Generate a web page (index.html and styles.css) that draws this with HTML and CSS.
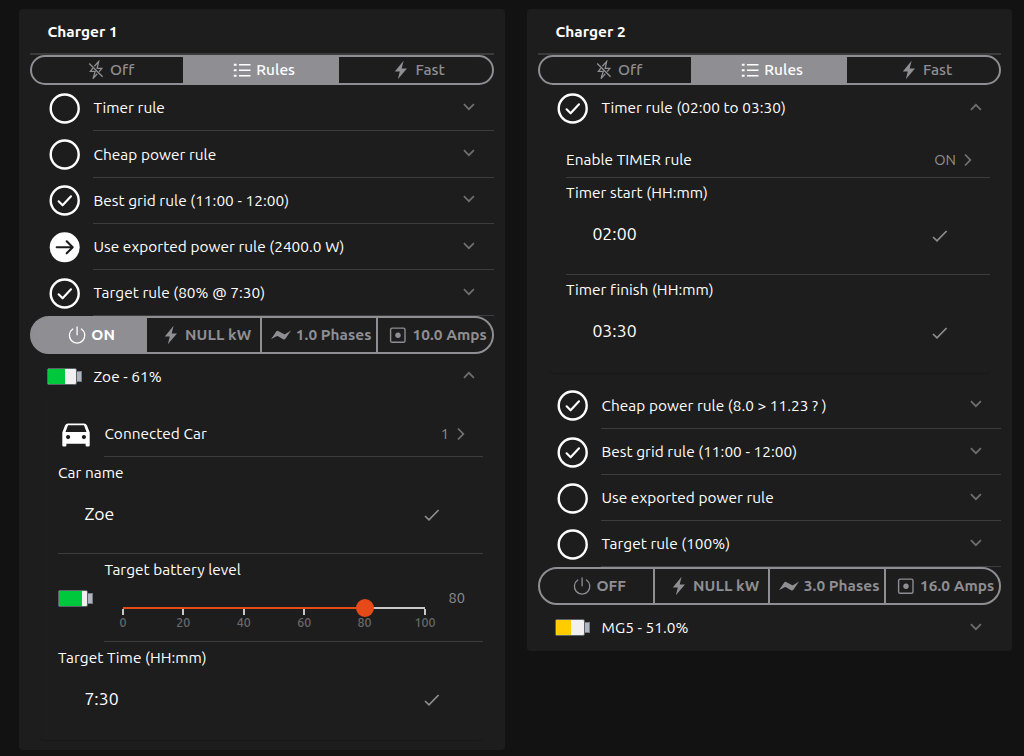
FILE: index.html
```
<!DOCTYPE html>
<html lang="en">
<head>
<meta charset="utf-8">
<title>Chargers</title>
<link rel="stylesheet" href="styles.css">
</head>
<body>
<svg class="defs" aria-hidden="true">
  <symbol id="ring" viewBox="0 0 31 31"><circle cx="15.7" cy="15.5" r="14" fill="none" stroke="#fff" stroke-width="2.4"/></symbol>
  <symbol id="ring-check" viewBox="0 0 31 31"><circle cx="15.7" cy="15.5" r="14" fill="none" stroke="#fff" stroke-width="2.4"/><path d="M9.6 16.3l4 4 8.4-9" fill="none" stroke="#fff" stroke-width="2.1" stroke-linecap="round" stroke-linejoin="round"/></symbol>
  <symbol id="ring-arrow" viewBox="0 0 31 31"><circle cx="15.7" cy="15.3" r="15" fill="#fff"/><path d="M7.7 15.3H23.4M17.7 9.3l6 6-6 6" fill="none" stroke="#1d1d1d" stroke-width="2.1" stroke-linecap="round" stroke-linejoin="round"/></symbol>
  <symbol id="down" viewBox="0 0 12 8"><path d="M.9 1.2l5 5 5-5" fill="none" stroke="#6f6f6f" stroke-width="1.7"/></symbol>
  <symbol id="up" viewBox="0 0 12 8"><path d="M.9 6.8l5-5 5 5" fill="none" stroke="#6f6f6f" stroke-width="1.7"/></symbol>
  <symbol id="right" viewBox="0 0 8 14"><path d="M1 1.5l5.3 5.5L1 12.5" fill="none" stroke="#727272" stroke-width="1.8"/></symbol>
  <symbol id="tick" viewBox="0 0 16 12"><path d="M1 7l4 3.8L14.6 1" fill="none" stroke="#8e8e8e" stroke-width="1.7"/></symbol>
  <symbol id="bolt" viewBox="0 0 20 20"><path d="M12.6 .8L3.8 11.4h5L6.8 19.3 16 8.4h-5.3z" fill="currentColor"/></symbol>
  <symbol id="bolt-off" viewBox="0 0 20 20"><path d="M8.4 6.2l4.2-4.6-1.4 6.8h4.6l-2.6 3.2M6.8 8.2L4.4 11.4h4.8L7 18.6l4.2-4.8" fill="none" stroke="currentColor" stroke-width="1.3"/><path d="M3.2 3.4l13.4 13.4" stroke="currentColor" stroke-width="1.4"/></symbol>
  <symbol id="list" viewBox="0 0 20 20"><path d="M7 4.8h11.5M7 10.2h11.5M7 15.7h11.5" stroke="currentColor" stroke-width="1.4"/><path d="M1.8 4.8h2.8M1.8 10.2h2.8M1.8 15.7h2.8" stroke="currentColor" stroke-width="1.9"/></symbol>
  <symbol id="power" viewBox="0 0 20 20"><path d="M5.8 4A7.7 7.7 0 1 0 14.4 4M10.1 2V9.8" fill="none" stroke="currentColor" stroke-width="1.3" stroke-linecap="round"/></symbol>
  <symbol id="wave" viewBox="0 0 20 20"><path d="M0 14.2L5.2 6.6q.8-1.3 2.4-.4L12.8 9q.9.5 2-.2L20 5.6l-5.4 8q-1 1.4-2.5.6L7 11.2q-.9-.4-1.9.2z" fill="currentColor"/></symbol>
  <symbol id="socket" viewBox="0 0 20 20"><rect x="2.6" y="3.1" width="14.4" height="14.2" rx="1.6" fill="none" stroke="currentColor" stroke-width="1.4"/><circle cx="10" cy="10.2" r="2.7" fill="currentColor"/></symbol>
  <symbol id="car" viewBox="0 0 28 25" preserveAspectRatio="none"><path fill="#fff" fill-rule="evenodd" d="M6 .5H22Q24.3.5 25 2.6L27.7 10V23.4Q27.7 24.6 26.4 24.6H25Q23.6 24.6 23.6 23.4V21.6H4.4V23.4Q4.4 24.6 3 24.6H1.6Q.3 24.6.3 23.4V10L3 2.6Q3.7.5 6 .5zM6 2.4L3.5 9.4H24.5L22 2.4zM6.1 12.6a2.1 2.1 0 1 0 .01 0zM21.9 12.6a2.1 2.1 0 1 0 .01 0z"/></symbol>
</svg>
<main class="page">
  <section class="card">
    <h2 class="card-title">Charger 1</h2>
    <div class="segments modes">
      <div class="seg"><svg class="ico"><use href="#bolt-off"/></svg><span>Off</span></div>
      <div class="seg active"><svg class="ico"><use href="#list"/></svg><span>Rules</span></div>
      <div class="seg"><svg class="ico"><use href="#bolt"/></svg><span>Fast</span></div>
    </div>
    <div class="rule"><svg class="ring"><use href="#ring"/></svg><div class="rule-body"><span>Timer rule</span><svg class="chev"><use href="#down"/></svg></div></div>
    <div class="rule tall"><svg class="ring"><use href="#ring"/></svg><div class="rule-body"><span>Cheap power rule</span><svg class="chev"><use href="#down"/></svg></div></div>
    <div class="rule raised"><svg class="ring"><use href="#ring-check"/></svg><div class="rule-body"><span>Best grid rule (11:00 - 12:00)</span><svg class="chev"><use href="#down"/></svg></div></div>
    <div class="rule"><svg class="ring"><use href="#ring-arrow"/></svg><div class="rule-body"><span>Use exported power rule (2400.0 W)</span><svg class="chev"><use href="#down"/></svg></div></div>
    <div class="rule"><svg class="ring"><use href="#ring-check"/></svg><div class="rule-body"><span>Target rule (80% @ 7:30)</span><svg class="chev"><use href="#down"/></svg></div></div>
    <div class="segments stats charging">
      <div class="seg active"><svg class="ico"><use href="#power"/></svg><span>ON</span></div>
      <div class="seg"><svg class="ico"><use href="#bolt"/></svg><span>NULL kW</span></div>
      <div class="seg"><svg class="ico"><use href="#wave"/></svg><span>1.0 Phases</span></div>
      <div class="seg"><svg class="ico"><use href="#socket"/></svg><span>10.0 Amps</span></div>
    </div>
    <div class="vehicle expanded"><div class="battery"><div class="cell"><div class="charge green" style="width:62%"></div></div></div><span class="name">Zoe - 61%</span><svg class="chev"><use href="#up"/></svg></div>
    <div class="inset first">
      <div class="link-row"><svg class="car"><use href="#car"/></svg><div class="link-body"><span>Connected Car</span><span class="value">1</span><svg class="arrow"><use href="#right"/></svg></div></div>
      <div class="field"><label>Car name</label><div class="entry"><span>Zoe</span><svg class="tick"><use href="#tick"/></svg></div></div>
      <div class="level">
        <div class="battery"><div class="cell"><div class="charge green" style="width:81%"></div></div></div>
        <div class="level-body">
          <label>Target battery level</label>
          <div class="slider-line">
            <div class="slider"><div class="track"><div class="filled" style="width:80%"></div><div class="thumb" style="left:80%"></div></div>
              <div class="scale"><span>0</span><span>20</span><span>40</span><span>60</span><span>80</span><span>100</span></div>
            </div>
            <span class="amount">80</span>
          </div>
        </div>
      </div>
      <div class="field last"><label>Target Time (HH:mm)</label><div class="entry"><span>7:30</span><svg class="tick"><use href="#tick"/></svg></div></div>
    </div>
  </section>

  <section class="card">
    <h2 class="card-title">Charger 2</h2>
    <div class="segments modes">
      <div class="seg"><svg class="ico"><use href="#bolt-off"/></svg><span>Off</span></div>
      <div class="seg active"><svg class="ico"><use href="#list"/></svg><span>Rules</span></div>
      <div class="seg"><svg class="ico"><use href="#bolt"/></svg><span>Fast</span></div>
    </div>
    <div class="rule open"><svg class="ring"><use href="#ring-check"/></svg><div class="rule-body"><span>Timer rule (02:00 to 03:30)</span><svg class="chev"><use href="#up"/></svg></div></div>
    <div class="inset second">
      <div class="link-row"><div class="link-body"><span>Enable TIMER rule</span><span class="value">ON</span><svg class="arrow"><use href="#right"/></svg></div></div>
      <div class="field"><label>Timer start (HH:mm)</label><div class="entry"><span>02:00</span><svg class="tick"><use href="#tick"/></svg></div></div>
      <div class="field last"><label>Timer finish (HH:mm)</label><div class="entry"><span>03:30</span><svg class="tick"><use href="#tick"/></svg></div></div>
    </div>
    <div class="rule raised"><svg class="ring"><use href="#ring-check"/></svg><div class="rule-body"><span>Cheap power rule (8.0 &gt; 11.23 ? )</span><svg class="chev"><use href="#down"/></svg></div></div>
    <div class="rule"><svg class="ring"><use href="#ring-check"/></svg><div class="rule-body"><span>Best grid rule (11:00 - 12:00)</span><svg class="chev"><use href="#down"/></svg></div></div>
    <div class="rule"><svg class="ring"><use href="#ring"/></svg><div class="rule-body"><span>Use exported power rule</span><svg class="chev"><use href="#down"/></svg></div></div>
    <div class="rule"><svg class="ring"><use href="#ring"/></svg><div class="rule-body"><span>Target rule (100%)</span><svg class="chev"><use href="#down"/></svg></div></div>
    <div class="segments stats">
      <div class="seg"><svg class="ico"><use href="#power"/></svg><span>OFF</span></div>
      <div class="seg"><svg class="ico"><use href="#bolt"/></svg><span>NULL kW</span></div>
      <div class="seg"><svg class="ico"><use href="#wave"/></svg><span>3.0 Phases</span></div>
      <div class="seg"><svg class="ico"><use href="#socket"/></svg><span>16.0 Amps</span></div>
    </div>
    <div class="vehicle"><div class="battery"><div class="cell"><div class="charge yellow" style="width:55%"></div></div></div><span class="name">MG5 - 51.0%</span><svg class="chev"><use href="#down"/></svg></div>
  </section>
</main>
</body>
</html>
```
FILE: styles.css
```
* { box-sizing: border-box; }
body {
  margin: 0;
  min-height: 756px;
  background: #121212;
  color: #fff;
  font-family: Ubuntu, "Noto Sans", sans-serif;
  font-size: 15.4px;
  line-height: 20px;
  letter-spacing: 0.04px;
}
svg { display: block; flex: none; }
.defs { display: none; }
.page { display: flex; align-items: flex-start; gap: 22px; padding: 9px 12px 0 19px; }
.card {
  width: 486px;
  padding: 0 11px;
  background: #1d1d1d;
  border-radius: 4px;
}
.card + .card { width: 485px; }
.card-title {
  height: 46px;
  margin: 0;
  padding: 13px 0 0 17.4px;
  border-bottom: 2px solid #3b3b3b;
  font-size: 15.4px;
  line-height: 20px;
  font-weight: 700;
}
.segments {
  display: grid;
  border: 2px solid #8e8e93;
  overflow: hidden;
  color: #8e8e93;
}
.modes { grid-template-columns: 151px 156px 1fr; height: 30px; border-radius: 15px; font-weight: 500; }
.stats { grid-template-columns: 115px 115px 116px 1fr; height: 38px; border-radius: 19px; font-weight: 700; }
.charging { background: linear-gradient(#8e8e93, #8e8e93) left / 60px 100% no-repeat border-box; }
.seg { display: flex; align-items: center; justify-content: center; gap: 4.4px; padding-left: 5px; white-space: nowrap; }
.stats .seg { border-right: 2px solid #8e8e93; }
.stats .seg:last-child { border-right: 0; }
.seg.active { background: #8e8e93; color: #fff; }
.ico { width: 20px; height: 20px; }
.rule { display: flex; height: 46px; padding-left: 19px; gap: 13px; }
.rule.tall { height: 47px; }
.rule.tall .rule-body { padding-top: 14px; }
.rule.tall .chev { margin-top: 4px; }
.ring { width: 31px; height: 31px; margin-top: 8px; }
.raised .ring { margin-top: 7px; }
.rule-body {
  flex: 1;
  display: flex;
  justify-content: space-between;
  padding: 13px 19px 0 0.5px;
  border-bottom: 1px solid #3d3d3d;
}
.open .rule-body { border-bottom: 0; }
.chev { width: 12px; height: 8px; margin-top: 5px; }
.raised .chev { margin-top: 4px; }
.card:first-child .chev { margin-right: 0.4px; }
.vehicle { display: flex; height: 46px; padding: 13px 19px 0 17px; }
.vehicle .name { margin-left: 11.5px; }
.vehicle .chev { margin-left: auto; }
.expanded .chev { margin-top: 4px; }
.battery { display: flex; align-items: center; width: 35px; height: 17px; margin-top: 1px; flex: none; }
.battery::after { content: ""; width: 4px; height: 9px; background: #b0b4be; border: 1px solid #777c84; border-left: 0; }
.cell { width: 31px; height: 17px; background: #f0f0f0; border: 1px solid #5b6268; border-radius: 2px; overflow: hidden; }
.charge { height: 100%; }
.green { background: #00c83c; }
.yellow { background: #ffcc00; }
.inset { border-radius: 4px; box-shadow: 0 1px 1px #191919; }
.inset.first { margin: 0 11px 10px; padding: 11px 0 0 17px; height: 340px; }
.inset.second { margin: 0 11px 10px; padding: 0 0 0 17px; height: 242px; }
.link-row { display: flex; }
.link-body { flex: 1; display: flex; border-bottom: 1px solid #3d3d3d; height: 46px; padding-top: 13px; }
.second .link-body { height: 47px; padding-top: 19px; }
.value { margin-left: auto; color: #8e8e8e; font-size: 14.6px; }
.arrow { width: 8px; height: 14px; margin: 3px 18px 0 8px; }
.car { width: 28px; height: 24px; margin: 12px 14.4px 0 4px; }
.field { height: 97px; border-bottom: 1px solid #3d3d3d; padding: 6px 0 0; }
.second .field { padding-top: 5px; }
.field.last { border-bottom: 0; }
.field label { display: block; }
.entry { display: flex; justify-content: space-between; padding: 19px 43px 0 26.4px; font-size: 17.6px; line-height: 24px; }
.tick { width: 16px; height: 12px; margin-top: 7px; }
.second .tick { margin-top: 8px; margin-right: -0.6px; }
.level { display: flex; gap: 11.4px; height: 88px; }
.level .battery { margin-top: 36px; }
.level-body { flex: 1; border-bottom: 1px solid #3d3d3d; padding-top: 6px; }
.level-body label { display: block; }
.slider-line { display: flex; justify-content: space-between; padding: 0 18px 0 18.6px; }
.slider { width: 302px; padding-top: 27px; }
.track { position: relative; height: 2px; background: #c8c8c8; }
.filled { height: 2px; background: #e64a19; }
.thumb { position: absolute; top: -8px; width: 18px; height: 18px; margin-left: -9px; border-radius: 50%; background: #e64a19; }
.scale { display: flex; justify-content: space-between; margin: 0 -15px; color: #6a6a6a; font-size: 12.4px; line-height: 15px; font-weight: 500; }
.scale span { width: 30px; text-align: center; }
.scale span::before { content: ""; display: block; width: 2px; height: 6px; margin: 0 auto; background: #c8c8c8; }
.amount { margin-top: 8px; color: #8e8e8e; font-size: 14.6px; }
```
